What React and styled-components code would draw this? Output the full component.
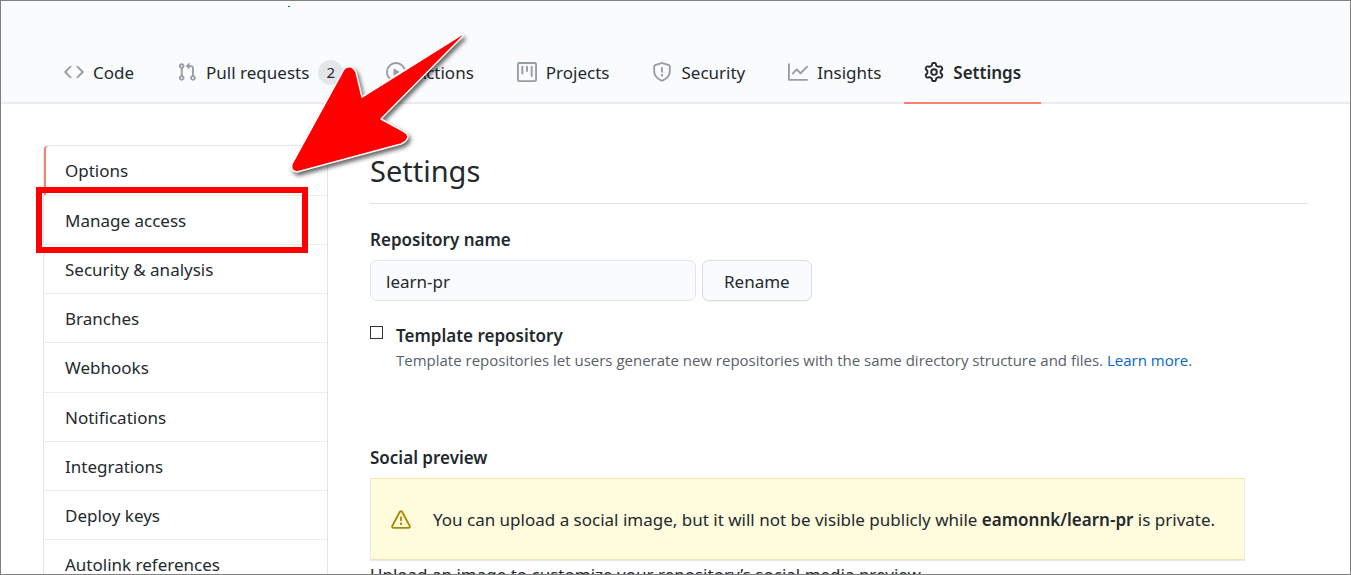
import React from 'react';
import styled, { createGlobalStyle, css } from 'styled-components';

const GlobalStyle = createGlobalStyle`
  *, *::before, *::after { box-sizing: border-box; }
  html, body { margin: 0; padding: 0; }
  body {
    background: #fff;
    color: #24292e;
    font: 400 17px/26px "Segoe UI", "Noto Sans", "Open Sans", sans-serif;
  }
  button, input { font: inherit; color: inherit; }
  a { color: inherit; text-decoration: none; }
`;

const ICONS = {
  code: 'M4.72 3.22a.75.75 0 011.06 1.06L2.06 8l3.72 3.72a.75.75 0 11-1.06 1.06L.47 8.53a.75.75 0 010-1.06l4.25-4.25zm6.56 0a.75.75 0 10-1.06 1.06L13.94 8l-3.72 3.72a.75.75 0 101.06 1.06l4.25-4.25a.75.75 0 000-1.06l-4.25-4.25z',
  pull: 'M7.177 3.073L9.573.677A.25.25 0 0110 .854v4.792a.25.25 0 01-.427.177L7.177 3.427a.25.25 0 010-.354zM3.75 2.5a.75.75 0 100 1.5.75.75 0 000-1.5zm-2.25.75a2.25 2.25 0 113 2.122v5.256a2.251 2.251 0 11-1.5 0V5.372A2.25 2.25 0 011.5 3.25zM11 2.5h-1V4h1a1 1 0 011 1v5.628a2.251 2.251 0 101.5 0V5A2.5 2.5 0 0011 2.5zm1 10.25a.75.75 0 111.5 0 .75.75 0 01-1.5 0zM3.75 12a.75.75 0 100 1.5.75.75 0 000-1.5z',
  play: 'M1.5 8a6.5 6.5 0 1113 0 6.5 6.5 0 01-13 0zM8 0a8 8 0 100 16A8 8 0 008 0zM6.379 5.227A.25.25 0 006 5.442v5.117a.25.25 0 00.379.214l4.264-2.559a.25.25 0 000-.428L6.379 5.227z',
  project: 'M1.75 0A1.75 1.75 0 000 1.75v12.5C0 15.216.784 16 1.75 16h12.5A1.75 1.75 0 0016 14.25V1.75A1.75 1.75 0 0014.25 0H1.75zM1.5 1.75a.25.25 0 01.25-.25h12.5a.25.25 0 01.25.25v12.5a.25.25 0 01-.25.25H1.75a.25.25 0 01-.25-.25V1.75zM11.75 3a.75.75 0 00-.75.75v7.5a.75.75 0 001.5 0v-7.5a.75.75 0 00-.75-.75zm-8.25.75a.75.75 0 011.5 0v5.5a.75.75 0 01-1.5 0v-5.5zM8 3a.75.75 0 00-.75.75v3.5a.75.75 0 001.5 0v-3.5A.75.75 0 008 3z',
  shield: 'M7.467.133a1.75 1.75 0 011.066 0l5.25 1.68A1.75 1.75 0 0115 3.48V7c0 1.566-.32 3.182-1.303 4.682-.983 1.498-2.585 2.813-5.032 3.855a1.7 1.7 0 01-1.33 0c-2.447-1.042-4.049-2.357-5.032-3.855C1.32 10.182 1 8.566 1 7V3.48a1.75 1.75 0 011.217-1.667l5.25-1.68zm.61 1.429a.25.25 0 00-.153 0l-5.25 1.68a.25.25 0 00-.174.238V7c0 1.358.275 2.666 1.057 3.86.784 1.194 2.121 2.34 4.366 3.297a.2.2 0 00.154 0c2.245-.956 3.582-2.104 4.366-3.298C13.225 9.666 13.5 8.36 13.5 7V3.48a.25.25 0 00-.174-.237l-5.25-1.68zM9 10.5a1 1 0 11-2 0 1 1 0 012 0zm-.25-5.75a.75.75 0 10-1.5 0v3a.75.75 0 001.5 0v-3z',
  graph: 'M1.5 1.75a.75.75 0 00-1.5 0v12.5c0 .414.336.75.75.75h14.5a.75.75 0 000-1.5H1.5V1.75zm14.28 2.53a.75.75 0 00-1.06-1.06L10 7.94 7.53 5.47a.75.75 0 00-1.06 0L3.22 8.72a.75.75 0 001.06 1.06L7 7.06l2.47 2.47a.75.75 0 001.06 0l5.25-5.25z',
  gear: 'M7.429 1.525a6.593 6.593 0 011.142 0c.036.003.108.036.137.146l.289 1.105c.147.56.55.967.997 1.189.174.086.341.183.501.29.417.278.97.423 1.53.27l1.102-.303c.11-.03.175.016.195.046.219.31.41.641.573.989.014.031.022.11-.059.19l-.815.806c-.411.406-.562.957-.53 1.456a4.588 4.588 0 010 .582c-.032.499.119 1.05.53 1.456l.815.806c.08.08.073.159.059.19a6.494 6.494 0 01-.573.99c-.02.029-.086.074-.195.045l-1.103-.303c-.559-.153-1.112-.008-1.529.27-.16.107-.327.204-.5.29-.449.222-.851.628-.998 1.189l-.289 1.105c-.029.11-.101.143-.137.146a6.613 6.613 0 01-1.142 0c-.036-.003-.108-.037-.137-.146l-.289-1.105c-.147-.56-.55-.967-.997-1.189a4.502 4.502 0 01-.501-.29c-.417-.278-.97-.423-1.53-.27l-1.102.303c-.11.03-.175-.016-.195-.046a6.492 6.492 0 01-.573-.989c-.014-.031-.022-.11.059-.19l.815-.806c.411-.406.562-.957.53-1.456a4.587 4.587 0 010-.582c.032-.499-.119-1.05-.53-1.456l-.815-.806c-.08-.08-.073-.159-.059-.19a6.44 6.44 0 01.573-.99c.02-.029.086-.075.195-.045l1.103.303c.559.153 1.112.008 1.529-.27.16-.107.327-.204.5-.29.449-.222.851-.628.998-1.189l.289-1.105c.029-.11.101-.143.137-.146zM8 0c-.236 0-.47.01-.701.03-.743.065-1.29.615-1.458 1.261l-.29 1.106c-.017.066-.078.158-.211.224a5.994 5.994 0 00-.668.386c-.123.082-.233.09-.3.071L3.27 2.776c-.644-.177-1.392.02-1.82.63a7.977 7.977 0 00-.704 1.217c-.315.675-.111 1.422.363 1.891l.815.806c.05.048.098.147.088.294a6.084 6.084 0 000 .772c.01.147-.038.246-.088.294l-.815.806c-.474.469-.678 1.216-.363 1.891.2.428.436.835.704 1.218.428.609 1.176.806 1.82.63l1.103-.303c.066-.019.176-.011.299.071.213.143.436.272.668.386.133.066.194.158.212.224l.289 1.106c.169.646.715 1.196 1.458 1.26a8.094 8.094 0 001.402 0c.743-.064 1.29-.614 1.458-1.26l.29-1.106c.017-.066.078-.158.211-.224a5.98 5.98 0 00.668-.386c.123-.082.233-.09.3-.071l1.102.302c.644.177 1.392-.02 1.82-.63.268-.382.505-.789.704-1.217.315-.675.111-1.422-.364-1.891l-.814-.806c-.05-.048-.098-.147-.088-.294a6.1 6.1 0 000-.772c-.01-.147.039-.246.088-.294l.814-.806c.475-.469.679-1.216.364-1.891a7.992 7.992 0 00-.704-1.218c-.428-.609-1.176-.806-1.82-.63l-1.103.303c-.066.019-.176.011-.299-.071a5.991 5.991 0 00-.668-.386c-.133-.066-.194-.158-.212-.224L10.16 1.29C9.99.645 9.444.095 8.701.031A8.094 8.094 0 008 0zm1.5 8a1.5 1.5 0 11-3 0 1.5 1.5 0 013 0zM11 8a3 3 0 11-6 0 3 3 0 016 0z',
  alert: 'M8.22 1.754a.25.25 0 00-.44 0L1.698 13.132a.25.25 0 00.22.368h12.164a.25.25 0 00.22-.368L8.22 1.754zm-1.763-.707c.659-1.234 2.427-1.234 3.086 0l6.082 11.378A1.75 1.75 0 0114.082 15H1.918a1.75 1.75 0 01-1.543-2.575L6.457 1.047zM9 11a1 1 0 11-2 0 1 1 0 012 0zm-.25-5.25a.75.75 0 00-1.5 0v2.5a.75.75 0 001.5 0v-2.5z',
};

const Frame = styled.div`
  position: relative;
  height: 100vh;
  overflow: hidden;
  border: 1px solid #808080;
`;

const Header = styled.header`
  display: flex;
  flex-direction: column;
  padding-left: 43px;
  background: #fafbfc;
  box-shadow: inset 0 -2px 0 #eaecef;
`;

const RepoLink = styled.a`
  width: 2px;
  height: 1px;
  margin: 5px 0 35px 244px;
  background: #0366d6;
`;

const Tabs = styled.nav`
  display: flex;
  gap: 3px;
`;

const Glyph = styled.svg`
  flex: none;
  width: 20px;
  height: 20px;
  fill: ${(p) => p.$color || '#959da5'};
`;

const Counter = styled.span`
  min-width: 25px;
  padding: 0 8px;
  border-radius: 13px;
  background: #e4e7ea;
  font-size: 15px;
  line-height: 25px;
  text-align: center;
`;

const Tab = styled.a`
  display: flex;
  align-items: center;
  gap: 9px;
  height: 62px;
  padding: 0 20px;
  white-space: nowrap;
  ${Glyph}, ${Counter} {
    margin-bottom: 2px;
  }
  ${(p) =>
    p.$active &&
    css`
      font-weight: 600;
      box-shadow: inset 0 -2px 0 #f9826c;
    `}
`;

const Body = styled.div`
  display: flex;
  align-items: flex-start;
  gap: 42px;
  padding: 41px 42px 0;
`;

const Menu = styled.nav`
  flex: 0 0 285px;
  border: 1px solid #e1e4e8;
  border-radius: 6px;
`;

const MenuItem = styled.a`
  display: block;
  height: 49px;
  padding: 12px 21px 0;
  border-bottom: 1px solid #eaecef;
  &:first-child {
    border-radius: 3px 0 0 0;
  }
  &:nth-child(4n + 1) {
    height: 50px;
  }
  ${(p) => p.$active && css`box-shadow: inset 2px 0 0 #f9826c;`}
`;

const Main = styled.main`
  flex: 1;
  min-width: 0;
`;

const Title = styled.h1`
  margin: 0 0 23px;
  padding: 5px 0 11px;
  border-bottom: 1px solid #e1e4e8;
  font-size: 29px;
  font-weight: 400;
  line-height: 42px;
`;

const FieldLabel = styled.label`
  display: block;
  margin-bottom: 7px;
  font-weight: 600;
`;

const FieldRow = styled.div`
  display: flex;
  gap: 6px;
  margin-bottom: 22px;
`;

const TextInput = styled.input`
  width: 326px;
  height: 41px;
  padding: 1px 15px 0;
  border: 1px solid #e1e4e8;
  border-radius: 7px;
  background: #fafbfc;
`;

const Button = styled.button`
  height: 41px;
  padding: 2px 21px 0;
  border: 1px solid #dadcde;
  border-radius: 7px;
  background: #fafbfc;
  box-shadow: 0 1px 0 #f3f4f4;
`;

const CheckRow = styled.div`
  display: grid;
  grid-template-columns: 14px 1fr;
  column-gap: 12px;
  margin-bottom: 73px;
`;

const Checkbox = styled.input`
  appearance: none;
  width: 13px;
  height: 13px;
  margin: 3px 0 0;
  border: 1px solid #333;
  background: #fff;
`;

const CheckLabel = styled.label`
  font-weight: 600;
`;

const Note = styled.p`
  grid-column: 2;
  margin: 0;
  color: #586069;
  font-family: "Segoe UI", "Open Sans", "Noto Sans", sans-serif;
  font-size: 15px;
  line-height: 23px;
`;

const NoteLink = styled.a`
  color: #0366d6;
`;

const SectionTitle = styled.h2`
  margin: 0 0 7px;
  font-size: 17px;
  font-weight: 600;
  line-height: 26px;
`;

const Warning = styled.div`
  display: flex;
  align-items: center;
  gap: 22px;
  max-width: 875px;
  height: 82px;
  padding: 2px 20px 0;
  border: 1px solid;
  border-color: #f0e4b0 #e8e8ee;
  background: #fffbdd;
  box-shadow: 0 1px 0 #e8e8ee;
  white-space: nowrap;

  b {
    font-weight: 600;
  }
`;

const Help = styled.p`
  margin: 2px 0 0;
`;

const Highlight = styled.div`
  position: absolute;
  left: 35px;
  top: 186px;
  width: 272px;
  height: 66px;
  border: 6px solid #f00;
`;

const Arrow = styled.svg`
  position: absolute;
  left: 278px;
  top: 18px;
  width: 200px;
  height: 170px;
  filter: drop-shadow(2px 3px 2px rgba(0, 0, 0, 0.6));
`;

const TABS = [
  { icon: 'code', label: 'Code' },
  { icon: 'pull', label: 'Pull requests', count: 2 },
  { icon: 'play', label: 'Actions' },
  { icon: 'project', label: 'Projects' },
  { icon: 'shield', label: 'Security' },
  { icon: 'graph', label: 'Insights' },
  { icon: 'gear', label: 'Settings', active: true },
];

const MENU = [
  'Options',
  'Manage access',
  'Security & analysis',
  'Branches',
  'Webhooks',
  'Notifications',
  'Integrations',
  'Deploy keys',
  'Autolink references',
];

function Icon({ name, color }) {
  return (
    <Glyph viewBox="0 0 16 16" $color={color} aria-hidden="true">
      <path fillRule="evenodd" d={ICONS[name]} />
    </Glyph>
  );
}

export default function App() {
  return (
    <Frame>
      <GlobalStyle />
      <Header>
        <RepoLink href="#repo" aria-label="Repository" />
        <Tabs>
          {TABS.map((t) => (
            <Tab key={t.label} href="#tab" $active={t.active}>
              <Icon name={t.icon} color={t.active ? '#24292e' : undefined} />
              {t.label}
              {t.count && <Counter>{t.count}</Counter>}
            </Tab>
          ))}
        </Tabs>
      </Header>
      <Body>
        <Menu>
          {MENU.map((label, i) => (
            <MenuItem key={label} href="#section" $active={i === 0}>
              {label}
            </MenuItem>
          ))}
        </Menu>
        <Main>
          <Title>Settings</Title>
          <FieldLabel htmlFor="repo-name">Repository name</FieldLabel>
          <FieldRow>
            <TextInput id="repo-name" type="text" defaultValue="learn-pr" />
            <Button type="button">Rename</Button>
          </FieldRow>
          <CheckRow>
            <Checkbox id="template" type="checkbox" />
            <CheckLabel htmlFor="template">Template repository</CheckLabel>
            <Note>
              Template repositories let users generate new repositories with the same directory structure and files.{' '}
              <NoteLink href="#learn">Learn more</NoteLink>.
            </Note>
          </CheckRow>
          <SectionTitle>Social preview</SectionTitle>
          <Warning>
            <Icon name="alert" color="#b08800" />
            <span>
              You can upload a social image, but it will not be visible publicly while <b>eamonnk/learn-pr</b> is private.
            </span>
          </Warning>
          <Help>Upload an image to customize your repository’s social media preview.</Help>
        </Main>
      </Body>
      <Highlight />
      <Arrow viewBox="280 20 200 170" aria-hidden="true">
        <path
          d="M462 36L363 98L357 73Q354 67 349 68Q346 68 344 72L293 165Q291 172 298 173L402 145Q409 142 409 137Q408 134 404 132L382 120L464 37Q464 35 462 36Z"
          fill="#f00"
          stroke="#fff"
          strokeWidth="1.5"
          strokeLinejoin="round"
        />
      </Arrow>
    </Frame>
  );
}
